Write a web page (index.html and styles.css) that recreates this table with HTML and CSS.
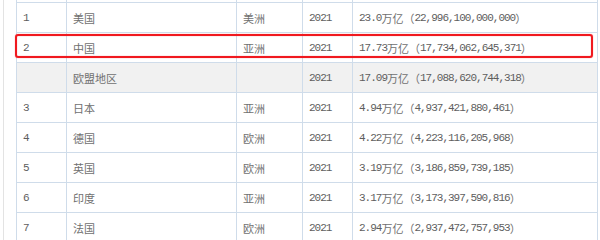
FILE: index.html
```html
<!DOCTYPE html>
<html lang="zh-CN">
<head>
<meta charset="utf-8">
<link rel="stylesheet" href="styles.css">
</head>
<body>
<div class="page">
  <div class="wrap">
    <div class="grid">
      <div class="cell num"></div><div class="cell cn"></div><div class="cell cn"></div><div class="cell num"></div><div class="cell num"></div>

      <div class="cell num">1</div><div class="cell cn">美国</div><div class="cell cn">美洲</div><div class="cell num">2021</div><div class="cell val"><span class="m">23.0</span><span class="c">万亿（</span><span class="m">22,996,100,000,000</span><span class="c">）</span></div>

      <div class="cell num">2</div><div class="cell cn">中国</div><div class="cell cn">亚洲</div><div class="cell num">2021</div><div class="cell val"><span class="m">17.73</span><span class="c">万亿（</span><span class="m">17,734,062,645,371</span><span class="c">）</span></div>

      <div class="cell num grey"></div><div class="cell cn grey">欧盟地区</div><div class="cell cn grey"></div><div class="cell num grey">2021</div><div class="cell val grey"><span class="m">17.09</span><span class="c">万亿（</span><span class="m">17,088,620,744,318</span><span class="c">）</span></div>

      <div class="cell num">3</div><div class="cell cn">日本</div><div class="cell cn">亚洲</div><div class="cell num">2021</div><div class="cell val"><span class="m">4.94</span><span class="c">万亿（</span><span class="m">4,937,421,880,461</span><span class="c">）</span></div>

      <div class="cell num">4</div><div class="cell cn">德国</div><div class="cell cn">欧洲</div><div class="cell num">2021</div><div class="cell val"><span class="m">4.22</span><span class="c">万亿（</span><span class="m">4,223,116,205,968</span><span class="c">）</span></div>

      <div class="cell num">5</div><div class="cell cn">英国</div><div class="cell cn">欧洲</div><div class="cell num">2021</div><div class="cell val"><span class="m">3.19</span><span class="c">万亿（</span><span class="m">3,186,859,739,185</span><span class="c">）</span></div>

      <div class="cell num">6</div><div class="cell cn">印度</div><div class="cell cn">亚洲</div><div class="cell num">2021</div><div class="cell val"><span class="m">3.17</span><span class="c">万亿（</span><span class="m">3,173,397,590,816</span><span class="c">）</span></div>

      <div class="cell num">7</div><div class="cell cn">法国</div><div class="cell cn">欧洲</div><div class="cell num">2021</div><div class="cell val"><span class="m">2.94</span><span class="c">万亿（</span><span class="m">2,937,472,757,953</span><span class="c">）</span></div>
    </div>
    <div class="highlight"></div>
  </div>
</div>
</body>
</html>
```

FILE: styles.css
```css
html, body {
  margin: 0;
  padding: 0;
  background: #ffffff;
}
body {
  width: 600px;
  height: 240px;
  overflow: hidden;
  font-family: "Noto Sans CJK SC", sans-serif;
}
.page {
  display: flow-root;
  margin-left: 3px;
  border-left: 1px solid #e3e3e3;
  padding-left: 12px;
  height: 240px;
}
.wrap {
  position: relative;
  width: 582px;
  margin-top: -28px;
}
.grid {
  display: grid;
  grid-template-columns: 49px 169px 65px 49px 244px;
  grid-auto-rows: 29px;
  gap: 1px;
  padding: 1px;
  background: #cfdcea;
}
.cell {
  background: #ffffff;
  display: flex;
  align-items: center;
  padding-left: 7px;
  color: #5e5e5e;
  white-space: nowrap;
  overflow: hidden;
}
.cell.grey {
  background: #f1f1f1;
}
.cn {
  font-family: "Noto Sans CJK SC", sans-serif;
  font-size: 11px;
  color: #707070;
  padding-left: 6px;
}
.num, .m {
  font-family: "Liberation Mono", "DejaVu Sans Mono", monospace;
  font-size: 11px;
  letter-spacing: -1px;
}
.num {
  padding-left: 6px;
}
.val {
  padding-left: 6px;
}
.c {
  font-family: "Noto Sans CJK SC", sans-serif;
  font-size: 11px;
  color: #707070;
}
.highlight {
  position: absolute;
  left: -1px;
  top: 62px;
  width: 574px;
  height: 20px;
  border: 2px solid #f0191f;
  border-radius: 3px;
  box-shadow: 0 0 1px rgba(240, 25, 31, 0.7), inset 0 0 1px rgba(240, 25, 31, 0.7);
}
```
